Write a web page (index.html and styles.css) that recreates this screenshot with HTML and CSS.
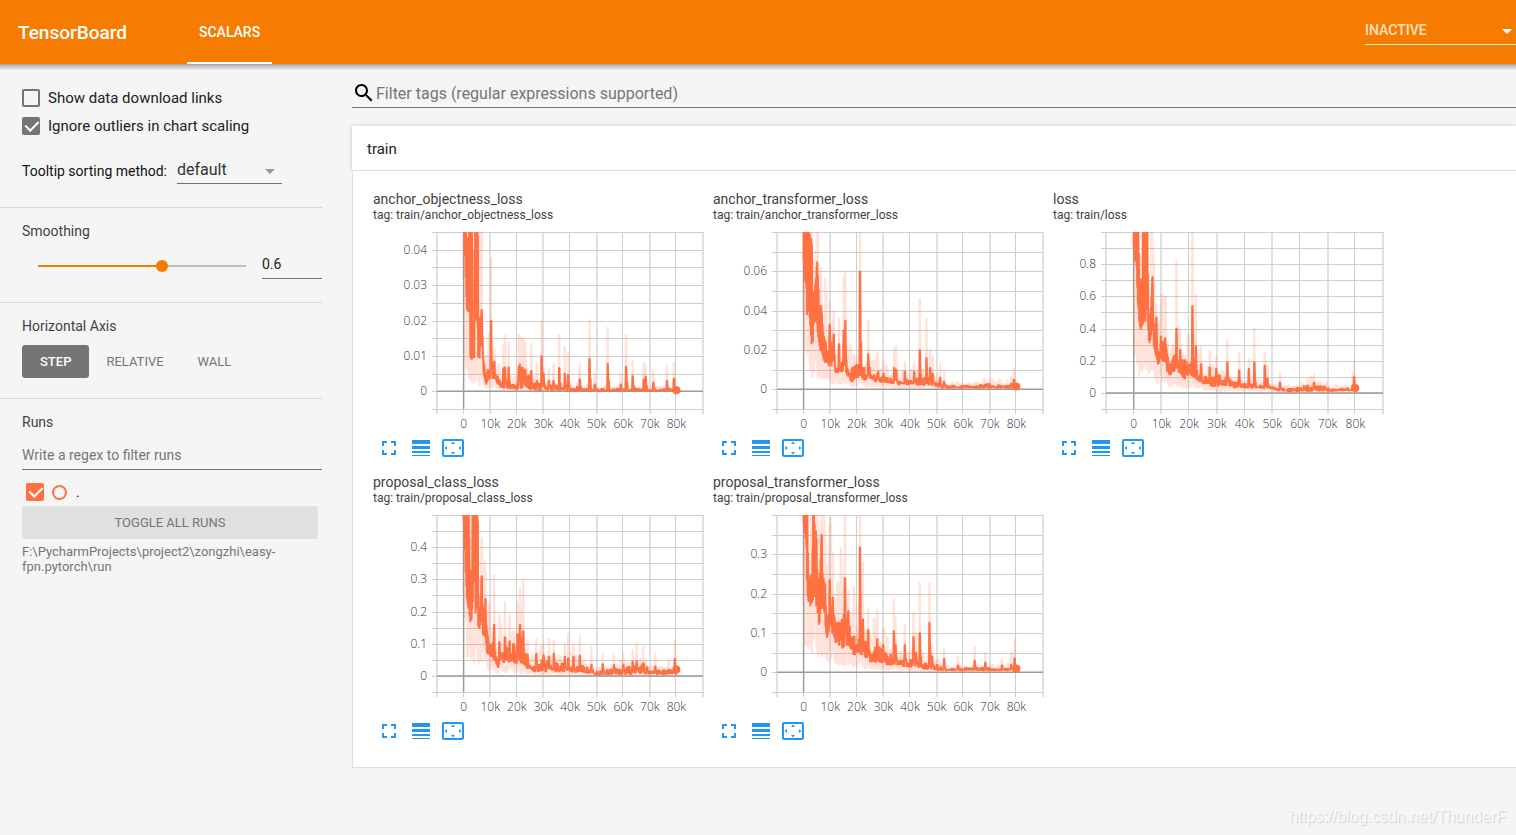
FILE: index.html
```html
<!DOCTYPE html>
<html lang="en">
<head>
<meta charset="utf-8">
<title>TensorBoard</title>
<link rel="stylesheet" href="styles.css">
</head>
<body>
<header class="toolbar">
  <h1 class="brand">TensorBoard</h1>
  <nav class="tabs"><a class="tab" href="#scalars">Scalars</a></nav>
  <div class="select-box plugin-select">
    <select aria-label="Inactive plugins"><option>INACTIVE</option></select>
  </div>
</header>
<div class="layout">
  <aside class="sidebar">
    <section class="group">
      <label class="check-row"><input class="check" type="checkbox"><span>Show data download links</span></label>
      <label class="check-row"><input class="check" type="checkbox" checked><span>Ignore outliers in chart scaling</span></label>
      <div class="tooltip-row">
        <label for="sorting">Tooltip sorting method:</label>
        <div class="select-box sort-select"><select id="sorting"><option>default</option></select></div>
      </div>
    </section>
    <section class="group">
      <h2 class="heading" id="smooth-label">Smoothing</h2>
      <div class="slider-row">
        <input class="slider" type="range" min="0" max="1" step="0.1" value="0.6" aria-labelledby="smooth-label">
        <input class="field number" type="text" value="0.6" aria-labelledby="smooth-label">
      </div>
    </section>
    <section class="group axis">
      <h2 class="heading">Horizontal Axis</h2>
      <div class="axis-row">
        <button class="axis-btn selected" type="button">Step</button>
        <button class="axis-btn" type="button">Relative</button>
        <button class="axis-btn" type="button">Wall</button>
      </div>
    </section>
    <section class="group runs">
      <h2 class="heading">Runs</h2>
      <input class="field regex" type="text" placeholder="Write a regex to filter runs" aria-label="Filter runs">
      <div class="run-row">
        <input class="check run-check" id="run-dot" type="checkbox" checked>
        <button class="isolate" type="button" aria-label="Show only this run"></button>
        <label for="run-dot">.</label>
      </div>
      <button class="toggle" type="button">Toggle all runs</button>
      <p class="logdir">F:\PycharmProjects\project2\zongzhi\easy-fpn.pytorch\run</p>
    </section>
  </aside>
  <main class="main">
    <label class="filter">
      <svg width="24" height="24" viewBox="0 0 24 24" aria-hidden="true"><path d="M15.5 14h-.79l-.28-.27C15.41 12.59 16 11.11 16 9.5 16 5.91 13.09 3 9.5 3S3 5.91 3 9.5 5.91 16 9.5 16c1.61 0 3.09-.59 4.23-1.57l.27.28v.79l5 4.99L20.49 19l-4.99-5zm-6 0C7.01 14 5 11.99 5 9.5S7.01 5 9.5 5 14 7.01 14 9.5 11.99 14 9.5 14z"/></svg>
      <input type="text" placeholder="Filter tags (regular expressions supported)" aria-label="Filter tags">
    </label>
    <section class="pane">
      <button class="pane-head" type="button">train</button>
      <div class="cards" id="cards"></div>
    </section>
  </main>
</div>
<div class="watermark">https://blog.csdn.net/ThunderF</div>
<template id="actions">
  <div class="actions">
    <button type="button" aria-label="Fit to full width"><svg width="24" height="24" viewBox="0 0 24 24"><path d="M7 14H5v5h5v-2H7v-3zm-2-4h2V7h3V5H5v5zm12 7h-3v2h5v-5h-2v3zM14 5v2h3v3h2V5h-5z"/></svg></button>
    <button type="button" aria-label="Toggle y-axis log scale"><svg width="24" height="24" viewBox="0 0 24 24"><path d="M3 17h18v-2H3v2zm0 3h18v-1H3v1zm0-7h18v-3H3v3zm0-9v4h18V4H3z"/></svg></button>
    <button type="button" aria-label="Fit domain to data"><svg width="24" height="24" viewBox="0 0 24 24"><path d="M12 5.5L10 8h4l-2-2.5zm6 4.5v4l2.5-2-2.5-2zM6 10l-2.5 2L6 14v-4zm8 6h-4l2 2.5 2-2.5zm7-13H3c-1.1 0-2 .9-2 2v14c0 1.1.9 2 2 2h18c1.1 0 2-.9 2-2V5c0-1.1-.9-2-2-2zm0 16.01H3V4.99h18v14.02z"/></svg></button>
  </div>
</template>
<script src="charts.js"></script>
</body>
</html>
```

FILE: styles.css
```css
* { box-sizing: border-box; }
body {
  margin: 0;
  min-height: 100vh;
  position: relative;
  background: #f5f5f5;
  color: #212121;
  font-family: Roboto, "Liberation Sans", sans-serif;
  font-size: 14px;
  overflow-x: hidden;
}
button, input, select { font: inherit; color: inherit; border: 0; padding: 0; background: none; border-radius: 0; outline: 0; }
button { cursor: pointer; }

.toolbar {
  position: relative;
  display: flex;
  height: 64px;
  align-items: center;
  padding-left: 18px;
  background: #f57c00;
  color: #fff;
}
.toolbar::after {
  content: "";
  position: absolute;
  left: 0; right: 0; top: 100%;
  height: 6px;
  background: linear-gradient(rgba(0,0,0,.32), rgba(0,0,0,.03));
}
.brand { margin: 0; width: 169px; font-size: 19px; font-weight: 500; }
.tabs { flex: 1; align-self: stretch; display: flex; }
.tab {
  display: flex;
  align-items: center;
  padding: 2px 12px 0;
  border-bottom: 2px solid #fff;
  color: #fff;
  font-weight: 500;
  text-transform: uppercase;
  text-decoration: none;
}
.select-box { position: relative; border-bottom: 1px solid #737373; }
.select-box select { display: block; width: 100%; appearance: none; }
.select-box::after {
  content: "";
  position: absolute;
  right: 7px; top: 9px;
  border: 5px solid transparent;
  border-top-color: #999;
  border-bottom: 0;
  pointer-events: none;
}
.plugin-select { align-self: flex-start; width: 151px; margin-top: 20px; border-color: #fde5cc; }
.plugin-select select { height: 24px; font-weight: 500; color: #fde0c2; padding-bottom: 4px; }
.plugin-select::after { right: 4px; border-top-color: #fff; }

.layout { display: flex; }
.sidebar { flex: 0 0 322px; margin-right: 30px; }
.group { padding: 15px 0 23px 22px; border-bottom: 1px solid #d6d6d6; }
.group:first-child { padding-top: 20px; }
.group.axis { padding-bottom: 20px; }
.group.runs { border: 0; }
.heading { margin: 0; font-size: 14px; line-height: 16px; font-weight: 400; color: #424242; }
.check-row { display: flex; align-items: center; gap: 8px; height: 28px; font-size: 15px; }
.check {
  appearance: none;
  position: relative;
  width: 18px; height: 18px;
  margin: 0;
  border: 2px solid #757575;
  border-radius: 2px;
}
.check:checked { background: #757575; }
.check:checked::after {
  content: "";
  position: absolute;
  left: 4px; top: -1px;
  width: 6px; height: 11px;
  border: solid #fff;
  border-width: 0 2px 2px 0;
  transform: rotate(45deg);
}
.tooltip-row { display: flex; align-items: center; gap: 10px; margin-top: 20px; color: #111; }
.tooltip-row > label { padding-bottom: 2px; }
.sort-select { width: 105px; }
.sort-select select { height: 23px; font-size: 16px; padding-bottom: 4px; color: #333; }

.slider-row { display: flex; align-items: center; gap: 16px; margin-top: 15px; padding-left: 16px; }
.slider {
  appearance: none;
  flex: 1;
  min-width: 0;
  height: 12px;
  margin: 0 0 2px;
  background: linear-gradient(90deg, #f57c00 60%, #bdbdbd 60%) center / 100% 2px no-repeat;
}
.slider::-webkit-slider-thumb { appearance: none; width: 12px; height: 12px; border-radius: 50%; background: #f57c00; }
.field { display: block; height: 25px; border-bottom: 1px solid #737373; padding-bottom: 4px; }
.number { width: 60px; }
.regex { width: 100%; margin-top: 15px; }
.field::placeholder, .filter input::placeholder { color: #757575; opacity: 1; }

.axis-row { display: flex; margin-top: 11px; }
.axis-btn { height: 33px; padding: 0 17px; border-radius: 3px; font-size: 13px; color: #757575; text-transform: uppercase; }
.axis-btn.selected { padding: 0 18px; background: #757575; color: #fff; font-weight: 500; }

.run-row { display: flex; align-items: center; gap: 8px; height: 18px; margin: 13px 0 5px 4px; }
.run-check { border-color: #ff7043; }
.run-check:checked { background: #ff7043; }
.isolate { width: 15px; height: 15px; border: 2px solid #ff7043; border-radius: 50%; }
.run-row label { margin-left: 1px; }
.toggle { display: block; width: calc(100% - 4px); height: 33px; border-radius: 3px; background: #e0e0e0; color: #757575; font-size: 13px; text-transform: uppercase; }
.logdir { margin: 5px 4px 0 0; font-size: 13px; line-height: 15px; color: #757575; }

.main { flex: 1; min-width: 0; padding-top: 17px; }
.filter { display: flex; align-items: center; height: 27px; padding-bottom: 2px; border-bottom: 1px solid #737373; }
.filter input { flex: 1; height: 24px; font-size: 16px; }
.pane { margin-top: 18px; }
.pane-head {
  display: block;
  width: 100%;
  height: 45px;
  padding: 2px 15px 0;
  border-bottom: 1px solid #ddd;
  background: #fff;
  box-shadow: 0 0 4px rgba(0,0,0,.2);
  font-size: 15px;
  text-align: left;
}
.cards {
  position: relative;
  display: flex;
  flex-wrap: wrap;
  gap: 11px 10px;
  padding: 20px 20px 21px;
  border: solid #ddd;
  border-width: 0 0 1px 1px;
  background: #fff;
}
.card { width: 330px; }
.card-title { margin: 0; font-size: 14px; line-height: 16px; font-weight: 400; color: #424242; }
.card-tag { margin: 0; font-size: 12px; line-height: 16px; color: #424242; }
.plot { display: block; width: 100%; height: auto; overflow: visible; }
.grid { stroke: #cecece; shape-rendering: crispEdges; }
.grid.wide { stroke: #e0e0e0; stroke-width: 2; }
.zero { stroke: #9b9b9b; stroke-width: 1.5; }
.label { font: 300 12px "Open Sans", "Noto Sans", sans-serif; fill: #32313f; }
.raw, .smooth { fill: none; stroke: #ff7043; stroke-width: 2; stroke-linejoin: bevel; }
.raw { stroke-opacity: .2; }
.end { fill: #ff7043; }
.actions { display: flex; gap: 8px; height: 30px; padding: 3px 0 3px 4px; }
.actions button { width: 24px; height: 24px; }
.actions svg { display: block; fill: #2196f3; }

.watermark {
  position: absolute;
  right: 10px; bottom: 9px;
  font: 16px/18px "Liberation Sans", sans-serif;
  color: #fafafa;
  text-shadow: 1px 1px 1px #ccc;
}
```

FILE: charts.js
```js
// hi / lo: range of the smoothed curve, [step in thousands, value].
// peaks: [step in thousands, smoothed value, raw value].
const charts = [
  { name: 'anchor_objectness_loss', left: 64, min: -0.005, max: 0.045, step: 0.005, labels: [0, 0.01, 0.02, 0.03, 0.04], seed: 3, end: 0.0003,
    hi: [[0,.06],[1,.06],[1.1,.044],[1.9,.044],[2,.06],[3.1,.06],[3.4,.016],[4,.015],[4.2,.06],[5.3,.06],[5.5,.021],[6.2,.02],[6.6,.024],[7,.019],[7.4,.009],[8.5,.005],[9.5,.008],[11,.007],[12.5,.005],[14,.0035],[18,.0022],[20,.0025],[21,.007],[24,.005],[26,.003],[30,.0018],[40,.0014],[50,.0008],[80,.0008]],
    lo: [[0,.045],[1,.015],[2,.013],[2.5,.009],[3.5,.0075],[4.2,.008],[4.8,.014],[5.3,.009],[5.8,.0045],[7,.006],[8.5,.0015],[10,.0035],[12,.0025],[14,.0008],[20,.0004],[30,0],[80,-.0001]],
    peaks: [[6.2,.021,.06],[6.8,.023,.06],[10.2,.02,.0375],[11.5,.0085,.012],[14.9,.0065,.013],[15.5,.0068,.0158],[16.9,.0068,.014],[20.7,.007,.016],[22.3,.0065,.015],[23.1,.0062,.014],[25.4,.0058,.0135],[27.5,.003,.008],[29.2,.01,.0202],[30,.005,.0065],[32,.003,.0065],[33.8,.003,.008],[35.9,.0066,.016],[38,.005,.0125],[39.2,.0047,.011],[43.6,.0034,.0078],[47.3,.0092,.0202],[49.3,.002,.005],[54.1,.0078,.018],[59,.002,.005],[61,.007,.016],[63.5,.0043,.0088],[67.6,.0033,.008],[68.4,.0042,.0072],[71.2,.0025,.0058],[76.4,.003,.0073],[79,.0036,.0082]] },
  { name: 'anchor_transformer_loss', left: 64, min: -0.01, max: 0.08, step: 0.01, labels: [0, 0.02, 0.04, 0.06], seed: 7, end: 0.0015,
    hi: [[0,.12],[1.7,.12],[2,.078],[2.6,.082],[3.1,.082],[3.3,.053],[4,.05],[4.6,.056],[5.1,.068],[5.6,.054],[6,.04],[6.7,.044],[7.3,.03],[8.5,.024],[9.2,.018],[10,.028],[11,.025],[12,.014],[14,.014],[16,.017],[17,.014],[18,.011],[20,.013],[22,.011],[25,.011],[27,.009],[30,.007],[33,.0055],[40,.0055],[48,.006],[50,.0035],[54,.002],[65,.002],[69,.003],[80,.002]],
    lo: [[0,.055],[.7,.038],[1.3,.03],[2,.04],[3,.021],[3.4,.018],[4,.03],[4.8,.03],[5.3,.02],[6,.018],[7,.016],[8.7,.01],[10,.012],[12,.0075],[14,.008],[16,.007],[18,.003],[20,.006],[24,.004],[30,.003],[35,.0018],[48,.0018],[52,.0004],[80,.0003]],
    peaks: [[8.2,.024,.04],[9.8,.033,.045],[11.2,.028,.04],[13.2,.023,.036],[15,.03,.057],[15.6,.035,.06],[21.1,.06,.12],[24.3,.018,.035],[28,.009,.015],[30,.008,.015],[34,.011,.021],[34.7,.01,.022],[38,.009,.014],[41.5,.009,.014],[43.6,.02,.046],[46.1,.016,.036],[47.5,.011,.02],[48.5,.008,.017],[51.3,.006,.013],[52.8,.004,.009],[78,.003,.006],[79,.005,.011]] },
  { name: 'loss', left: 53, min: -0.1, max: 1, step: 0.1, labels: [0, 0.2, 0.4, 0.6, 0.8], seed: 11, end: 0.03,
    hi: [[0,1.3],[1.1,1.3],[1.8,.98],[2.2,.6],[2.7,.75],[3.2,.65],[3.4,1.3],[4,1.1],[4.1,.8],[4.4,1.1],[5,1.2],[5.2,.5],[6,.5],[6.7,.72],[7.2,.42],[8.1,.45],[8.8,.25],[9.8,.33],[11.5,.33],[12,.24],[13,.17],[14,.22],[16,.24],[18,.19],[20,.22],[23,.15],[25,.1],[30,.11],[35,.08],[40,.06],[47,.05],[50,.04],[54,.03],[63,.045],[68,.05],[70,.03],[80,.03]],
    lo: [[0,.9],[1,.7],[1.4,.44],[2.5,.38],[3.4,.42],[4.2,.39],[5,.5],[5.4,.27],[6.5,.35],[7.5,.27],[8.6,.16],[10,.2],[13,.1],[15,.14],[18,.08],[20,.1],[22,.08],[25,.05],[30,.03],[45,.025],[49,.02],[55,.005],[80,.01]],
    peaks: [[6.7,.72,.84],[8.1,.47,.55],[9.8,.35,.54],[11.3,.34,.6],[15.4,.4,.82],[16.8,.27,.39],[21.1,.54,1.3],[22.4,.29,.61],[24.3,.18,.29],[27.4,.16,.26],[29.8,.15,.22],[33.7,.19,.33],[38,.14,.25],[41.5,.15,.21],[43.5,.19,.4],[47.3,.17,.25],[48.3,.09,.17],[52.7,.065,.12],[65,.065,.12],[79,.05,.12],[79.5,.1,.2]] },
  { name: 'proposal_class_loss', left: 64, min: -0.05, max: 0.5, step: 0.05, labels: [0, 0.1, 0.2, 0.3, 0.4], seed: 19, end: 0.02,
    hi: [[0,.7],[2,.7],[2.2,.3],[2.8,.35],[3.2,.3],[3.3,.7],[5.3,.7],[5.5,.22],[6,.2],[6.8,.31],[7.3,.18],[8,.22],[9,.12],[10.5,.1],[11.5,.12],[12.2,.06],[13,.05],[13.5,.09],[20,.09],[21.5,.12],[23,.07],[26,.03],[30,.05],[35,.04],[45,.03],[50,.015],[55,.02],[60,.025],[68,.035],[70,.02],[80,.02]],
    lo: [[0,.46],[.8,.3],[1.3,.21],[2.4,.15],[3.4,.17],[4.2,.15],[5,.2],[5.4,.13],[6.5,.15],[7.5,.11],[8.5,.07],[10,.055],[12,.04],[13,.02],[14,.04],[17,.04],[19,.03],[22,.02],[25,.02],[27,.01],[30,.012],[45,.008],[50,.002],[80,.003]],
    peaks: [[6.7,.31,.43],[8.1,.24,.34],[11.4,.16,.314],[13.4,.105,.19],[15.5,.12,.23],[17.3,.108,.19],[18.6,.1,.14],[20.3,.13,.23],[21.1,.16,.27],[22.4,.14,.3],[24,.067,.11],[27.2,.07,.115],[30,.065,.1],[32,.06,.115],[33.9,.07,.11],[38,.06,.1],[39.2,.055,.13],[41.2,.06,.1],[43.6,.063,.125],[48,.035,.09],[52.3,.037,.07],[56.5,.035,.07],[60,.035,.07],[63.5,.045,.08],[65,.047,.105],[67.5,.04,.09],[72,.03,.07],[77,.02,.05],[79.4,.053,.11]] },
  { name: 'proposal_transformer_loss', left: 64, min: -0.05, max: 0.4, step: 0.05, labels: [0, 0.1, 0.2, 0.3], seed: 23, end: 0.01,
    hi: [[0,.6],[1.3,.6],[1.5,.35],[2,.22],[2.8,.25],[3.3,.24],[3.5,.45],[4.1,.4],[4.2,.36],[4.8,.37],[5.2,.24],[6,.24],[6.7,.35],[7.2,.24],[8,.24],[8.6,.12],[9.2,.15],[9.8,.22],[10.8,.19],[11.5,.16],[15,.15],[17,.12],[20,.1],[23,.08],[25,.07],[30,.055],[35,.035],[42,.035],[45,.025],[50,.02],[54,.012],[80,.012]],
    lo: [[0,.3],[.7,.25],[1.3,.17],[2.5,.16],[3.5,.18],[4.5,.19],[5.3,.11],[6.5,.13],[8,.13],[8.8,.075],[10,.11],[12,.07],[14,.055],[16,.06],[18,.045],[22,.04],[25,.025],[30,.02],[35,.015],[40,.012],[45,.008],[51,.003],[80,.003]],
    peaks: [[6.8,.35,.6],[7.4,.24,.5],[9.8,.235,.37],[10.9,.19,.305],[15.5,.24,.5],[16.8,.156,.21],[21.1,.317,.6],[22.3,.135,.28],[24.3,.108,.16],[27.6,.085,.158],[29.9,.07,.11],[33.9,.105,.186],[34.5,.07,.14],[38,.07,.12],[41.3,.09,.15],[42.3,.05,.1],[43.6,.1,.227],[47.3,.126,.227],[48.2,.04,.07],[52.8,.035,.06],[58,.018,.04],[64.2,.03,.066],[68.3,.025,.05],[74.5,.018,.035],[78,.02,.05],[79.3,.036,.084]] }
];

const TOP = 9, HEIGHT = 177, RIGHT = 330;

function random(seed) {
  return () => (seed = (seed * 16807) % 2147483647) / 2147483647;
}

function at(points, k) {
  for (let i = 1; i < points.length; i++) {
    const [x0, y0] = points[i - 1], [x1, y1] = points[i];
    if (k <= x1) return y0 + (y1 - y0) * (k - x0) / (x1 - x0);
  }
  return points[points.length - 1][1];
}

function plot(c, id) {
  const x = k => c.left + (RIGHT - c.left) * (k + 10) / 100;
  const y = v => TOP + HEIGHT * (c.max - v) / (c.max - c.min);
  const rand = random(c.seed * 7919);
  const smooth = [], raw = [];
  let high = 1, low = 0, rawHigh = 1;
  for (let i = 0; i <= 640; i++) {
    const k = i / 8, h = at(c.hi, k), l = at(c.lo, k);
    if (i % 5 === 0) {
      high = k < 8 ? 0.9 + rand() * 0.1 : 0.4 + rand() * 0.75;
      low = rand() * 0.3;
      rawHigh = 1.1 + rand() * rand() * 1.3;
    }
    const up = i % 2;
    const q = rand();
    let s = l + (h - l) * (up ? high : low);
    let w = up ? h * rawHigh : l * (0.25 + q * 0.5);
    for (const [pk, ps, pr] of c.peaks) {
      const d = Math.round((k - pk) * 8);
      if (d === 0 || d === 1) { s = ps; w = pr; }
      if (d === 2) s = Math.max(s, ps * 0.6);
      if (d === 4) s = Math.max(s, ps * 0.4);
    }
    smooth.push(x(k).toFixed(1) + ' ' + y(s).toFixed(1));
    raw.push(x(k).toFixed(1) + ' ' + y(w).toFixed(1));
  }
  const bottom = TOP + HEIGHT;
  let g = '';
  for (let i = 0; i <= 10; i++) {
    const gx = Math.round(x(i * 10 - 10));
    g += i % 2 ? `<path class="grid" d="M${gx - 0.5} ${TOP}V${bottom + 5}"/>` : `<path class="grid wide" d="M${gx} ${TOP}V${bottom + 5}"/>`;
  }
  const rows = Math.round((c.max - c.min) / c.step);
  for (let i = 0; i <= rows; i++) {
    const gy = Math.round(TOP + HEIGHT * i / rows) + 0.5;
    g += `<path class="grid" d="M${c.left - 5} ${gy}H${RIGHT}"/>`;
  }
  g += `<path class="zero" d="M${c.left} ${y(0)}H${RIGHT}M${x(0)} ${TOP}V${bottom}"/>`;
  for (const v of c.labels) g += `<text class="label" text-anchor="end" x="${c.left - 10}" y="${Math.round(y(v)) + 4}">${v}</text>`;
  for (let i = 0; i <= 8; i++) g += `<text class="label" text-anchor="middle" x="${x(i * 10)}" y="205">${i ? i * 10 + 'k' : 0}</text>`;
  return `<svg class="plot" viewBox="0 0 330 210" role="img" aria-label="${c.name}">
    <clipPath id="${id}"><rect x="${c.left}" y="${TOP}" width="${RIGHT - c.left}" height="${HEIGHT}"/></clipPath>${g}
    <g clip-path="url(#${id})"><path class="raw" d="M${raw.join('L')}"/><path class="smooth" d="M${smooth.join('L')}"/></g>
    <circle class="end" cx="${x(80)}" cy="${y(c.end)}" r="4"/></svg>`;
}

charts.forEach((c, i) => {
  const card = document.createElement('article');
  card.className = 'card';
  card.innerHTML = `<h3 class="card-title">${c.name}</h3><p class="card-tag">tag: train/${c.name}</p>` + plot(c, 'clip' + i);
  card.append(document.getElementById('actions').content.cloneNode(true));
  document.getElementById('cards').append(card);
});
```
